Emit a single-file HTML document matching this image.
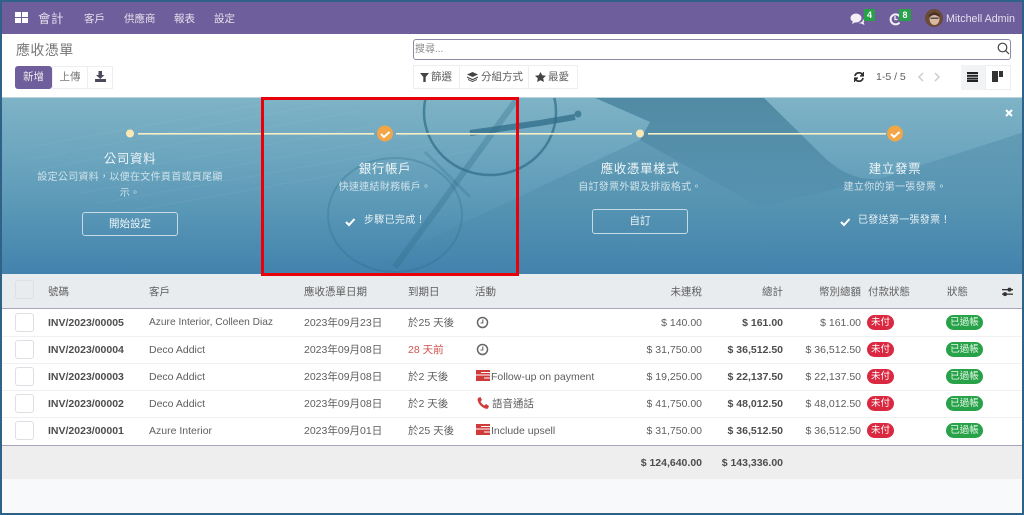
<!DOCTYPE html>
<html lang="zh-Hant"><head><meta charset="utf-8"><title>應收憑單</title>
<style>
html,body{margin:0;padding:0;width:1024px;height:515px;overflow:hidden;background:#f8f9fa}
body{position:relative;font-family:"Liberation Sans","Noto Sans CJK TC",sans-serif;font-size:10.5px;color:#4c4c4c}
#w{position:absolute;left:0;top:0;width:1024px;height:515px;overflow:hidden;filter:blur(.3px)}
.a{position:absolute;white-space:nowrap}
.c{text-align:center}.r{text-align:right}
.nav{color:#e6e0ec;font-size:10.5px;top:12px;line-height:14px}
.btn{box-sizing:border-box;border:1px solid #eceef0;background:#fff}
.h{color:#5e5e5e;font-size:10.5px;top:285px;line-height:14px}
.t{line-height:14px;font-size:10.5px;color:#5e5e5e;transform:translateY(1px)}
.b{font-weight:bold;color:#4e4e4e}
.cb{position:absolute;left:15px;width:19px;height:19px;box-sizing:border-box;border:1px solid #dcdfe3;border-radius:3px;background:#fff}
.red{position:absolute;left:867px;width:27px;height:15px;border-radius:8px;background:#d9283f;color:#fff;font-size:9.5px;line-height:15px;text-align:center}
.grn{position:absolute;left:946px;width:37px;height:15px;border-radius:8px;background:#28a248;color:#e8f8ec;font-size:9.5px;line-height:15px;text-align:center}
.ttl{color:#eef5f8;font-size:12.5px;line-height:16px;letter-spacing:.6px}
.sub{color:#cfe2ea;font-size:10px;line-height:16px;letter-spacing:.3px}
.ob{box-sizing:border-box;border:1px solid #c5dbe5;border-radius:3px;color:#eef5f8;font-size:10.5px;text-align:center}
</style></head><body><div id="w">

<!-- navbar -->
<div class="a" style="left:0;top:0;width:1024px;height:34px;background:#6f5e9c"></div>
<svg class="a" style="left:15px;top:12px" width="13" height="11"><rect width="6" height="5" fill="#fff"/><rect x="7" width="6" height="5" fill="#fff"/><rect y="6" width="6" height="5" fill="#fff"/><rect x="7" y="6" width="6" height="5" fill="#fff"/></svg>
<div class="a nav" style="left:38px;top:11px;font-size:12.5px;line-height:16px;letter-spacing:.5px">會計</div>
<div class="a nav" style="left:84px">客戶</div>
<div class="a nav" style="left:124px">供應商</div>
<div class="a nav" style="left:174px">報表</div>
<div class="a nav" style="left:214px">設定</div>
<svg class="a" style="left:850px;top:12px" width="16" height="13" fill="#f3f0f7"><ellipse cx="6" cy="6" rx="5.500" ry="4.500"/><path d="M3 9 L2 12 L6 10Z"/><path d="M8 11 Q13 11 13 7 L14.500 9 L13.500 10 L14.500 13 L11 11.500Z"/></svg>
<div class="a" style="left:864px;top:9px;width:11px;height:12px;background:#28a248;color:#fff;font-size:9px;font-weight:bold;line-height:12px;text-align:center">4</div>
<svg class="a" style="left:888px;top:12px" width="14" height="14" fill="none" stroke="#f3f0f7" stroke-width="2"><path d="M11.500 10.500A5 5 0 1 1 12 5"/><path d="M7 4V7.500H9.500" stroke-width="1.300"/></svg>
<div class="a" style="left:899px;top:9px;width:12px;height:12px;background:#28a248;color:#fff;font-size:9px;font-weight:bold;line-height:12px;text-align:center">8</div>
<svg class="a" style="left:925px;top:9px" width="18" height="18"><circle cx="9" cy="9" r="9" fill="#6b4a36"/><ellipse cx="9.500" cy="10" rx="5" ry="6" fill="#d9b7a0"/><path d="M3 7Q9 0 15 6L14 8Q9 4 5 8Z" fill="#4a3226"/><rect x="5.500" y="8.500" width="8" height="1.500" fill="#4f4f4f"/></svg>
<div class="a" style="left:946px;top:12px;color:#e6e0ec;font-size:10.7px;line-height:14px">Mitchell Admin</div>

<!-- control panel -->
<div class="a" style="left:0;top:34px;width:1024px;height:63px;background:#fff"></div>
<div class="a" style="left:16px;top:41px;color:#777;font-size:14px;line-height:18px;letter-spacing:.4px">應收憑單</div>
<div class="a" style="left:15px;top:66px;width:37px;height:23px;background:#6f5e9c;border-radius:3px;color:#eee;font-size:10.5px;line-height:23px;text-align:center">新增</div>
<div class="a btn" style="left:52px;top:66px;width:36px;height:23px;color:#777;line-height:21px;text-align:center">上傳</div>
<div class="a btn" style="left:87px;top:66px;width:26px;height:23px"></div>
<svg class="a" style="left:94px;top:71px" width="13" height="12" fill="#4a4a5a"><path d="M4.500 0H8V4H10.500L6.250 8L2 4H4.500Z"/><rect x="1" y="8" width="11" height="3" rx=".5"/></svg>

<div class="a" style="left:413px;top:39px;width:598px;height:21px;box-sizing:border-box;border:1px solid #8d8aa5;border-radius:3px;background:#fff"></div>
<div class="a" style="left:415px;top:43px;color:#888;font-size:10px;line-height:13px">搜尋...</div>
<svg class="a" style="left:997px;top:42px" width="13" height="13" fill="none" stroke="#444" stroke-width="1.200"><circle cx="5.500" cy="5.500" r="4.300"/><path d="M8.700 8.700L12 12"/></svg>

<div class="a btn" style="left:413px;top:65px;width:47px;height:24px"></div>
<div class="a btn" style="left:459px;top:65px;width:70px;height:24px"></div>
<div class="a btn" style="left:528px;top:65px;width:50px;height:24px"></div>
<svg class="a" style="left:420px;top:73px" width="9" height="9" fill="#444"><path d="M0 0H9L5.700 4V9H3.300V4Z"/></svg>
<div class="a t" style="left:431px;top:69px">篩選</div>
<svg class="a" style="left:467px;top:72px" width="11" height="10" fill="#444"><path d="M5.500 0L11 2.500L5.500 5L0 2.500Z"/><path d="M0 4.500L5.500 7L11 4.500V5.800L5.500 8.300L0 5.800Z"/><path d="M1 7L5.500 9L10 7V8L5.500 10L1 8Z"/></svg>
<div class="a t" style="left:481px;top:69px">分組方式</div>
<svg class="a" style="left:535px;top:72px" width="11" height="10" fill="#444"><path d="M5.500 0L7.200 3.300L11 3.800L8.200 6.300L8.900 10L5.500 8.200L2.100 10L2.800 6.300L0 3.800L3.800 3.300Z"/></svg>
<div class="a t" style="left:548px;top:69px">最愛</div>

<svg class="a" style="left:854px;top:72px" width="10" height="10" fill="none" stroke="#333" stroke-width="1.800"><path d="M1 4A4 4 0 0 1 8.500 3"/><path d="M9 6A4 4 0 0 1 1.500 7"/><path d="M9.500 0V4H6" stroke-width="1.200" fill="#333"/><path d="M.5 10V6H4" stroke-width="1.200" fill="#333"/></svg>
<div class="a t" style="left:876px;top:69px">1-5 / 5</div>
<svg class="a" style="left:917px;top:72px" width="32" height="10" fill="none" stroke="#c9ced3" stroke-width="1.500"><path d="M6 1L2 5L6 9"/><path d="M18 1L22 5L18 9"/></svg>
<div class="a" style="left:961px;top:65px;width:24px;height:25px;background:#f1f3f5"></div>
<div class="a btn" style="left:985px;top:65px;width:26px;height:25px"></div>
<svg class="a" style="left:967px;top:72px" width="11" height="10" fill="#222"><rect width="11" height="2"/><rect y="2.800" width="11" height="2"/><rect y="5.600" width="11" height="2"/><rect y="8" width="11" height="2"/></svg>
<svg class="a" style="left:992px;top:71px" width="11" height="11" fill="#333"><rect width="6" height="11"/><rect x="7" width="4" height="6"/></svg>

<!-- banner -->
<svg class="a" style="left:0;top:97px" width="1024" height="177" viewBox="0 0 1024 177">
<defs>
<linearGradient id="g" x1="0" y1="0" x2="0" y2="1"><stop offset="0" stop-color="#7fb3c6"/><stop offset=".55" stop-color="#5f9cb9"/><stop offset="1" stop-color="#4282ac"/></linearGradient>
<linearGradient id="d" x1="0" y1="0" x2="0" y2="1"><stop offset="0" stop-color="#2d6a86" stop-opacity=".38"/><stop offset="1" stop-color="#2d6a86" stop-opacity=".05"/></linearGradient>
<linearGradient id="e" x1="0" y1="0" x2="0" y2="1"><stop offset="0" stop-color="#2b6a8c" stop-opacity=".3"/><stop offset="1" stop-color="#2b6a8c" stop-opacity="0"/></linearGradient>
</defs>
<rect width="1024" height="177" fill="url(#g)"/>
<g stroke="#fff" stroke-opacity=".05" stroke-width="1"><path d="M30 50L300 0M30 62L330 6M30 74L360 14M60 84L380 28M80 96L420 36M100 106L440 46M130 114L470 54"/></g>
<path d="M380 165 L640 43 L650 25 L593 0 H763 L827 63 Q857 88 885 80 L1024 35 V177 H380 Z" fill="url(#e)"/>
<path d="M593 0 H763 L827 63 Q857 88 885 80 L760 110 L640 43 L650 25 Z" fill="url(#d)"/>
<g fill="none" stroke="#2f6c88">
<ellipse cx="490" cy="15" rx="66" ry="63" stroke-width="2.500" stroke-opacity=".7"/>
<ellipse cx="395" cy="118" rx="67" ry="57" stroke-width="2" stroke-opacity=".3"/>
<path d="M395 170L517 2" stroke-width="6" stroke-opacity=".32"/>
<path d="M470 36L540 26L575 20" stroke-width="6" stroke-opacity=".75"/>
<path d="M425 55L470 100" stroke-width="3" stroke-opacity=".25"/>
</g>
<circle cx="578" cy="17" r="3.500" fill="#2f6c88" opacity=".7"/>
<rect x="1" y="0" width="1022" height="1" fill="#bcd3db"/>
<rect x="138" y="36" width="236" height="1.600" fill="#f6eec6"/>
<rect x="396" y="36" width="236" height="1.600" fill="#f6eec6"/>
<rect x="648" y="36" width="238" height="1.600" fill="#f6eec6"/>
<circle cx="130" cy="36.500" r="4" fill="#fbe9b5"/>
<circle cx="640" cy="36.500" r="4" fill="#fbe9b5"/>
<circle cx="385" cy="36.500" r="8" fill="#f2a647"/>
<circle cx="895" cy="36.500" r="8" fill="#f2a647"/>
<path d="M381 37L384 40L389.500 35" fill="none" stroke="#fff" stroke-width="2"/>
<path d="M891 37L894 40L899.500 35" fill="none" stroke="#fff" stroke-width="2"/>
<path d="M1006 13L1012 19M1012 13L1006 19" stroke="#fff" stroke-width="2"/>
<path d="M346 125L349 128L354.500 122" fill="none" stroke="#fff" stroke-width="2"/>
<path d="M841 125L844 128L849.500 122" fill="none" stroke="#fff" stroke-width="2"/>
</svg>

<div class="a c ttl" style="left:30px;width:200px;top:151px">公司資料</div>
<div class="a c sub" style="left:30px;width:200px;top:170px">設定公司資料，以便在文件頁首或頁尾顯</div>
<div class="a c sub" style="left:30px;width:200px;top:186px">示。</div>
<div class="a ob" style="left:82px;top:212px;width:96px;height:24px;line-height:22px">開始設定</div>

<div class="a c ttl" style="left:285px;width:200px;top:161px">銀行帳戶</div>
<div class="a c sub" style="left:285px;width:200px;top:180px">快速連結財務帳戶。</div>
<div class="a sub" style="left:364px;top:213px;color:#e8f1f5">步驟已完成！</div>

<div class="a c ttl" style="left:540px;width:200px;top:161px">應收憑單樣式</div>
<div class="a c sub" style="left:540px;width:200px;top:180px">自訂發票外觀及排版格式。</div>
<div class="a ob" style="left:592px;top:209px;width:96px;height:25px;line-height:23px">自訂</div>

<div class="a c ttl" style="left:795px;width:200px;top:161px">建立發票</div>
<div class="a c sub" style="left:795px;width:200px;top:180px">建立你的第一張發票。</div>
<div class="a sub" style="left:858px;top:213px;color:#e8f1f5">已發送第一張發票！</div>

<!-- red highlight -->
<div class="a" style="left:261px;top:97px;width:258px;height:179px;box-sizing:border-box;border:3px solid #e8000b"></div>

<!-- table head -->
<div class="a" style="left:0;top:276px;width:261px;height:0"></div>
<div class="a" style="left:0;top:274px;width:261px;height:2px;background:#e9ecef"></div>
<div class="a" style="left:519px;top:274px;width:505px;height:2px;background:#e9ecef"></div>
<div class="a" style="left:0;top:276px;width:1024px;height:33px;background:#e9ecef;border-bottom:1px solid #a9a6bd;box-sizing:border-box"></div>
<div class="cb" style="top:280px;background:#e9ecef"></div>
<div class="a h" style="left:48px">號碼</div>
<div class="a h" style="left:149px">客戶</div>
<div class="a h" style="left:304px">應收憑單日期</div>
<div class="a h" style="left:408px">到期日</div>
<div class="a h" style="left:475px">活動</div>
<div class="a h r" style="left:640px;width:62px">未連稅</div>
<div class="a h r" style="left:720px;width:63px">總計</div>
<div class="a h r" style="left:790px;width:71px">幣別總額</div>
<div class="a h" style="left:868px">付款狀態</div>
<div class="a h" style="left:947px">狀態</div>
<svg class="a" style="left:1002px;top:287px" width="11" height="10" fill="#333"><rect y="2" width="11" height="1.300"/><rect y="6.500" width="11" height="1.300"/><circle cx="7.500" cy="2.600" r="2"/><circle cx="3" cy="7.100" r="2"/></svg>

<!-- rows -->
<div class="a" style="left:0;top:309px;width:1024px;height:136px;background:#fff"></div>
<div class="a" style="left:0;top:336px;width:1024px;height:1px;background:#eef0f2"></div>
<div class="a" style="left:0;top:363px;width:1024px;height:1px;background:#eef0f2"></div>
<div class="a" style="left:0;top:390px;width:1024px;height:1px;background:#eef0f2"></div>
<div class="a" style="left:0;top:417px;width:1024px;height:1px;background:#eef0f2"></div>
<div class="a" style="left:0;top:445px;width:1024px;height:1px;background:#a9a6bd"></div>

<div class="cb" style="top:313px"></div><div class="cb" style="top:340px"></div><div class="cb" style="top:367px"></div><div class="cb" style="top:394px"></div><div class="cb" style="top:421px"></div>

<div class="a t b" style="left:48px;top:315px">INV/2023/00005</div>
<div class="a t" style="left:149px;top:315px;font-size:10.2px">Azure Interior, Colleen Diaz</div>
<div class="a t" style="left:304px;top:315px">2023年09月23日</div>
<div class="a t" style="left:408px;top:315px">於25 天後</div>
<svg class="a" style="left:476px;top:316px" width="13" height="13" fill="none" stroke="#666" stroke-width="1.500"><circle cx="6.500" cy="6.500" r="5"/><path d="M6.800 3.500V7H4.500" stroke-width="1.100"/></svg>
<div class="a t r" style="left:640px;top:315px;width:62px">$ 140.00</div>
<div class="a t b r" style="left:720px;top:315px;width:63px">$ 161.00</div>
<div class="a t r" style="left:790px;top:315px;width:71px">$ 161.00</div>
<div class="red" style="top:315px">未付</div><div class="grn" style="top:315px">已過帳</div>

<div class="a t b" style="left:48px;top:342px">INV/2023/00004</div>
<div class="a t" style="left:149px;top:342px">Deco Addict</div>
<div class="a t" style="left:304px;top:342px">2023年09月08日</div>
<div class="a t" style="left:408px;top:342px;color:#d25050">28 天前</div>
<svg class="a" style="left:476px;top:343px" width="13" height="13" fill="none" stroke="#666" stroke-width="1.500"><circle cx="6.500" cy="6.500" r="5"/><path d="M6.800 3.500V7H4.500" stroke-width="1.100"/></svg>
<div class="a t r" style="left:640px;top:342px;width:62px">$ 31,750.00</div>
<div class="a t b r" style="left:720px;top:342px;width:63px">$ 36,512.50</div>
<div class="a t r" style="left:790px;top:342px;width:71px">$ 36,512.50</div>
<div class="red" style="top:342px">未付</div><div class="grn" style="top:342px">已過帳</div>

<div class="a t b" style="left:48px;top:369px">INV/2023/00003</div>
<div class="a t" style="left:149px;top:369px">Deco Addict</div>
<div class="a t" style="left:304px;top:369px">2023年09月08日</div>
<div class="a t" style="left:408px;top:369px">於2 天後</div>
<svg class="a" style="left:476px;top:370px" width="14" height="11"><rect width="14" height="11" fill="#cf3b3b"/><rect x="5" y="2" width="9" height="1" fill="#fff"/><rect y="4.500" width="14" height="1" fill="#fff"/><rect x="8" y="7.500" width="6" height="1" fill="#fff"/></svg>
<div class="a t" style="left:491px;top:369px">Follow-up on payment</div>
<div class="a t r" style="left:640px;top:369px;width:62px">$ 19,250.00</div>
<div class="a t b r" style="left:720px;top:369px;width:63px">$ 22,137.50</div>
<div class="a t r" style="left:790px;top:369px;width:71px">$ 22,137.50</div>
<div class="red" style="top:369px">未付</div><div class="grn" style="top:369px">已過帳</div>

<div class="a t b" style="left:48px;top:396px">INV/2023/00002</div>
<div class="a t" style="left:149px;top:396px">Deco Addict</div>
<div class="a t" style="left:304px;top:396px">2023年09月08日</div>
<div class="a t" style="left:408px;top:396px">於2 天後</div>
<svg class="a" style="left:477px;top:397px" width="12" height="12" fill="#cf3b3b"><path d="M1 1L3.500 0L5 3L3.500 4.500Q5 7.500 7.500 8.500L9 7L12 9L11 11.500Q10 12 8 11.500Q2 9 .5 3Z"/></svg>
<div class="a t" style="left:492px;top:396px">語音通話</div>
<div class="a t r" style="left:640px;top:396px;width:62px">$ 41,750.00</div>
<div class="a t b r" style="left:720px;top:396px;width:63px">$ 48,012.50</div>
<div class="a t r" style="left:790px;top:396px;width:71px">$ 48,012.50</div>
<div class="red" style="top:396px">未付</div><div class="grn" style="top:396px">已過帳</div>

<div class="a t b" style="left:48px;top:423px">INV/2023/00001</div>
<div class="a t" style="left:149px;top:423px">Azure Interior</div>
<div class="a t" style="left:304px;top:423px">2023年09月01日</div>
<div class="a t" style="left:408px;top:423px">於25 天後</div>
<svg class="a" style="left:476px;top:424px" width="14" height="11"><rect width="14" height="11" fill="#cf3b3b"/><rect x="5" y="2" width="9" height="1" fill="#fff"/><rect y="4.500" width="14" height="1" fill="#fff"/><rect x="8" y="7.500" width="6" height="1" fill="#fff"/></svg>
<div class="a t" style="left:491px;top:423px">Include upsell</div>
<div class="a t r" style="left:640px;top:423px;width:62px">$ 31,750.00</div>
<div class="a t b r" style="left:720px;top:423px;width:63px">$ 36,512.50</div>
<div class="a t r" style="left:790px;top:423px;width:71px">$ 36,512.50</div>
<div class="red" style="top:423px">未付</div><div class="grn" style="top:423px">已過帳</div>

<!-- footer -->
<div class="a" style="left:0;top:446px;width:1024px;height:33px;background:#eeeeee"></div>
<div class="a" style="left:0;top:479px;width:1024px;height:36px;background:#f8f9fa"></div>
<div class="a t b r" style="left:620px;top:455px;width:82px">$ 124,640.00</div>
<div class="a t b r" style="left:700px;top:455px;width:83px">$ 143,336.00</div>

<!-- screenshot border -->
<div class="a" style="left:0;top:0;width:1024px;height:515px;box-sizing:border-box;border:2px solid #2f6286"></div>
</div></body></html>
